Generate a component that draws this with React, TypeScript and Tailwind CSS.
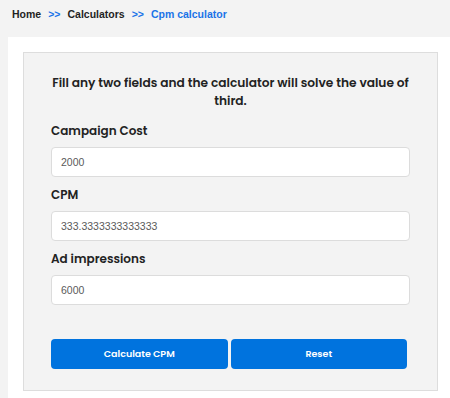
import React, { useState } from 'react';

const heading = "font-['Poppins','Inter','Open_Sans',sans-serif]";

export default function App() {
  const [cost, setCost] = useState('2000');
  const [cpm, setCpm] = useState('333.3333333333333');
  const [impressions, setImpressions] = useState('6000');

  const fields = [
    { label: 'Campaign Cost', value: cost, set: setCost },
    { label: 'CPM', value: cpm, set: setCpm },
    { label: 'Ad impressions', value: impressions, set: setImpressions },
  ];

  return (
    <div className="min-h-screen bg-[#f3f3f3] font-['Liberation_Sans',Arial,sans-serif]">
      {/* Breadcrumb */}
      <div className="h-[37px] pl-[12px] pt-[6px] flex items-start text-[10.5px] font-bold leading-[16px]">
        <span className="text-[#1f1f1f]">Home</span>
        <span className="text-[#1a73e8] mx-[7px]">&gt;&gt;</span>
        <span className="text-[#1f1f1f]">Calculators</span>
        <span className="text-[#1a73e8] mx-[7px]">&gt;&gt;</span>
        <span className="text-[#1a73e8]">Cpm calculator</span>
      </div>

      {/* Panel */}
      <div className="ml-[8px] bg-white pt-[15px] pl-[15px] pr-[12px] pb-[10px]">
        <div className="border border-[#dddddd] bg-[#f3f3f3] px-[27px] pt-[21px] pb-[21px]">
          <h2 className={`${heading} -mx-[4px] text-center text-[12.2px] leading-[18px] font-semibold text-[#222]`}>
            Fill any two fields and the calculator will solve the value of third.
          </h2>

          <div className="mt-[13px]">
            {fields.map((f, i) => (
              <div key={f.label} className={i > 0 ? 'mt-[10px]' : ''}>
                <label className={`${heading} block text-[12px] leading-[16px] font-semibold text-[#222] mb-[8px]`}>
                  {f.label}
                </label>
                <input
                  value={f.value}
                  onChange={(e) => f.set(e.target.value)}
                  className="block w-full h-[30px] rounded-[4px] border border-[#dcdcdc] bg-white px-[9px] text-[10.5px] text-[#5a5a5a] outline-none"
                />
              </div>
            ))}
          </div>

          <div className="mt-[34px] flex gap-[3px] pr-[3px]">
            <button className={`${heading} flex-1 h-[30px] rounded-[4px] bg-[#0073de] text-white text-[9.5px] font-semibold`}>
              Calculate CPM
            </button>
            <button className={`${heading} flex-1 h-[30px] rounded-[4px] bg-[#0073de] text-white text-[9.5px] font-semibold`}>
              Reset
            </button>
          </div>
        </div>
      </div>
    </div>
  );
}
